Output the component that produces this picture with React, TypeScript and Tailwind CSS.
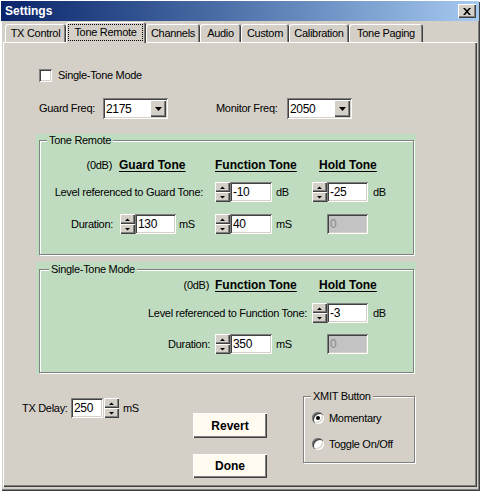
import React from 'react';

const raised = 'shadow-[inset_1px_1px_0_#fff,inset_-1px_-1px_0_#404040,inset_-2px_-2px_0_#808080]';
const sunken = 'shadow-[inset_1px_1px_0_#808080,inset_-1px_-1px_0_#fff,inset_2px_2px_0_#404040,inset_-2px_-2px_0_#d4d0c8]';
const etched = 'border border-[#808080] shadow-[1px_1px_0_#fff,inset_1px_1px_0_#fff]';

function Spin() {
  return (
    <div className="flex flex-col w-[15px] h-[20px] shrink-0">
      <div className={`h-[10px] bg-[#d4d0c8] flex items-center justify-center ${raised}`}>
        <svg width="5" height="3" viewBox="0 0 5 3">
          <path d="M0 3H5L2.5 0.5Z" fill="#000" />
        </svg>
      </div>
      <div className={`h-[10px] bg-[#d4d0c8] flex items-center justify-center ${raised}`}>
        <svg width="5" height="3" viewBox="0 0 5 3">
          <path d="M0 0H5L2.5 2.5Z" fill="#000" />
        </svg>
      </div>
    </div>
  );
}

function Field({ value, w, disabled = false }: { value: string; w: string; disabled?: boolean }) {
  return (
    <div
      className={`${w} h-[20px] shrink-0 flex items-center pl-[3px] ${sunken} ${
        disabled ? 'bg-[#c3c3c3] text-[#8a8a8a]' : 'bg-white'
      } text-[12px]`}
    >
      {value}
    </div>
  );
}

function Combo({ value }: { value: string }) {
  return (
    <div className={`w-[65px] h-[21px] bg-white flex items-center justify-between pl-[3px] pr-[2px] ${sunken}`}>
      <span className="text-[12px]">{value}</span>
      <div className={`w-[16px] h-[17px] bg-[#d4d0c8] flex items-center justify-center ${raised}`}>
        <svg width="7" height="4" viewBox="0 0 7 4">
          <path d="M0 0H7L3.5 4Z" fill="#000" />
        </svg>
      </div>
    </div>
  );
}

function Radio({ checked }: { checked?: boolean }) {
  return (
    <div className="w-[12px] h-[12px] rounded-full bg-white flex items-center justify-center shrink-0 shadow-[inset_1px_1px_0_#808080,inset_2px_2px_0_#404040,inset_-1px_-1px_0_#fff,inset_-2px_-2px_0_#d4d0c8]">
      {checked && <div className="w-[4px] h-[4px] rounded-full bg-black" />}
    </div>
  );
}

function Tab({ label, w, active = false }: { label: string; w: string; active?: boolean }) {
  if (active) {
    return (
      <div
        className={`${w} h-[21px] -mb-[1px] relative z-10 bg-[#d4d0c8] rounded-t-[3px] pl-[2px] pr-[3px] pt-[2px] pb-[2px] flex shadow-[inset_1px_1px_0_#fff,inset_-1px_0_0_#404040,inset_-2px_0_0_#808080]`}
      >
        <div className="flex-1 border border-dotted border-black flex items-center justify-center pb-[1px]">
          {label}
        </div>
      </div>
    );
  }
  return (
    <div
      className={`${w} h-[18px] bg-[#d4d0c8] rounded-t-[3px] flex items-center justify-center shadow-[inset_1px_1px_0_#fff,inset_-1px_0_0_#404040,inset_-2px_0_0_#808080]`}
    >
      {label}
    </div>
  );
}

const head = 'font-bold underline underline-offset-[2px] text-[12px] tracking-normal';

export default function App() {
  return (
    <div className="w-[480px] h-[491px] bg-[#d4d0c8] flex flex-col font-['Liberation_Sans',Arial,sans-serif] text-[11px] tracking-[-0.3px] text-black select-none shadow-[inset_2px_2px_0_#fff,inset_-1px_-1px_0_#404040,inset_-2px_-2px_0_#808080]">
      {/* title bar */}
      <div className="mx-[1px] mt-[1px] h-[20px] bg-linear-to-r from-[#0a246a] to-[#a6caf0] flex items-center justify-between pl-[4px] pr-[3px]">
        <span className="text-white font-bold text-[12px] tracking-normal">Settings</span>
        <div className={`w-[18px] h-[14px] bg-[#d4d0c8] flex items-center justify-center ${raised}`}>
          <svg width="8" height="7" viewBox="0 0 8 7">
            <path d="M0 0h2l2 2.3L6 0h2L5 3.5 8 7H6L4 4.7 2 7H0l3-3.5z" fill="#000" />
          </svg>
        </div>
      </div>

      {/* tabs */}
      <div className="mt-[1px] h-[20px] flex items-end pl-[5px]">
        <Tab label="TX Control" w="w-[61px]" />
        <Tab label="Tone Remote" w="w-[80px]" active />
        <Tab label="Channels" w="w-[54px]" />
        <Tab label="Audio" w="w-[41px]" />
        <Tab label="Custom" w="w-[48px]" />
        <Tab label="Calibration" w="w-[60px]" />
        <Tab label="Tone Paging" w="w-[74px]" />
      </div>

      {/* tab panel */}
      <div className="ml-[3px] w-[474px] h-[445px] flex flex-col shadow-[inset_1px_1px_0_#fff,inset_-1px_-1px_0_#404040,inset_-2px_-2px_0_#808080]">
        <div className="mt-[27px] ml-[36px] h-[13px] flex items-center">
          <div className={`w-[13px] h-[13px] bg-white ${sunken}`} />
          <span className="ml-[6px]">Single-Tone Mode</span>
        </div>

        <div className="mt-[16px] ml-[36px] h-[21px] flex items-center">
          <span className="w-[64px]">Guard Freq:</span>
          <Combo value="2175" />
          <span className="ml-[48px] w-[71px]">Monitor Freq:</span>
          <Combo value="2050" />
        </div>

        {/* Tone Remote group */}
        <div className="mt-[15px] ml-[33px] w-[380px] h-[122px] bg-[#c0dcc0] pl-[3px] pr-[2px] pb-[1px] flex">
          <fieldset className={`w-full h-[121px] ${etched}`}>
            <legend className="ml-[7px] px-[2px] leading-[12px] bg-[#c0dcc0]">Tone Remote</legend>
            <div className="mt-[9px] h-[20px] flex items-center">
              <span className="w-[79px] text-right pr-[7px]">(0dB)</span>
              <span className={`w-[96px] ${head}`}>Guard Tone</span>
              <span className={`w-[104px] ${head}`}>Function Tone</span>
              <span className={head}>Hold Tone</span>
            </div>
            <div className="mt-[7px] h-[20px] flex items-center">
              <span className="w-[175px] text-right pr-[12px]">Level referenced to Guard Tone:</span>
              <Spin />
              <Field value="-10" w="w-[42px]" />
              <span className="w-[40px] pl-[4px]">dB</span>
              <Spin />
              <Field value="-25" w="w-[41px]" />
              <span className="pl-[5px]">dB</span>
            </div>
            <div className="mt-[12px] h-[20px] flex items-center">
              <span className="w-[80px] text-right pr-[7px]">Duration:</span>
              <Spin />
              <Field value="130" w="w-[41px]" />
              <span className="w-[39px] pl-[3px]">mS</span>
              <Spin />
              <Field value="40" w="w-[42px]" />
              <span className="w-[55px] pl-[4px]">mS</span>
              <Field value="0" w="w-[41px]" disabled />
            </div>
          </fieldset>
        </div>

        {/* Single-Tone Mode group */}
        <div className="mt-[6px] ml-[33px] w-[380px] h-[112px] bg-[#c0dcc0] pl-[3px] pr-[2px] pt-[1px] pb-[1px] flex">
          <fieldset className={`w-full h-[110px] ${etched}`}>
            <legend className="ml-[9px] px-[2px] leading-[12px] bg-[#c0dcc0]">Single-Tone Mode</legend>
            <div className="h-[20px] flex items-center">
              <span className="w-[175px] text-right pr-[6px]">(0dB)</span>
              <span className={`w-[104px] ${head}`}>Function Tone</span>
              <span className={head}>Hold Tone</span>
            </div>
            <div className="mt-[8px] h-[20px] flex items-center">
              <span className="w-[272px] text-right pr-[5px]">Level referenced to Function Tone:</span>
              <Spin />
              <Field value="-3" w="w-[41px]" />
              <span className="pl-[5px]">dB</span>
            </div>
            <div className="mt-[11px] h-[20px] flex items-center">
              <span className="w-[175px] text-right pr-[5px]">Duration:</span>
              <Spin />
              <Field value="350" w="w-[42px]" />
              <span className="w-[55px] pl-[4px]">mS</span>
              <Field value="0" w="w-[41px]" disabled />
            </div>
          </fieldset>
        </div>

        {/* bottom */}
        <div className="flex items-start">
          <div className="ml-[19px] w-[171px] mt-[24px] h-[20px] flex items-center shrink-0">
            <span className="w-[49px]">TX Delay:</span>
            <Field value="250" w="w-[32px]" />
            <div className="ml-[1px]">
              <Spin />
            </div>
            <span className="ml-[4px]">mS</span>
          </div>
          <div className="w-[74px] flex flex-col shrink-0">
            <div className={`mt-[39px] h-[25px] bg-[#fffbf0] flex items-center justify-center font-bold text-[12px] tracking-normal ${raised}`}>
              Revert
            </div>
            <div className={`mt-[16px] h-[24px] bg-[#fffbf0] flex items-center justify-center font-bold text-[12px] tracking-normal ${raised}`}>
              Done
            </div>
          </div>
          <fieldset className={`ml-[36px] mt-[16px] w-[112px] h-[73px] shrink-0 ${etched}`}>
            <legend className="ml-[7px] px-[2px] leading-[12px] bg-[#d4d0c8]">XMIT Button</legend>
            <div className="mt-[8px] ml-[8px] h-[16px] flex items-center">
              <Radio checked />
              <span className="ml-[5px]">Momentary</span>
            </div>
            <div className="mt-[10px] ml-[8px] h-[16px] flex items-center">
              <Radio />
              <span className="ml-[5px]">Toggle On/Off</span>
            </div>
          </fieldset>
        </div>
      </div>
    </div>
  );
}
